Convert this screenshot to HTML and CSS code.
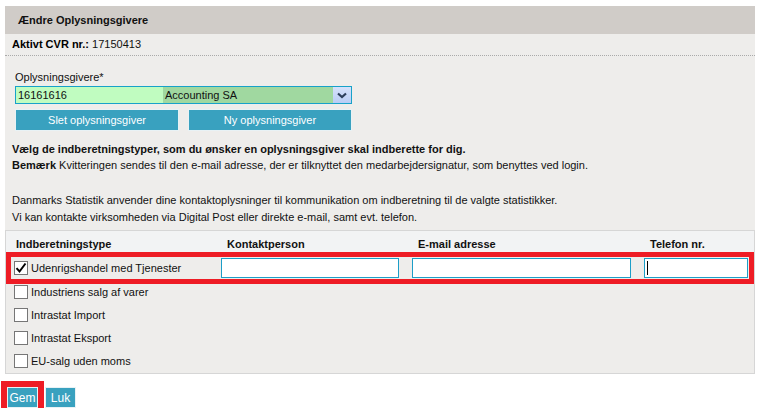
FILE: index.html
```html
<!DOCTYPE html>
<html lang="da">
<head>
    <meta charset="UTF-8">
    <title>Ændre Oplysningsgivere</title>
    <link rel="stylesheet" href="styles.css">
</head>
<body>
    <div class="panel">
        <div class="panel-header">Ændre Oplysningsgivere</div>
        <div class="panel-body">
            <div class="cvr"><b>Aktivt CVR nr.:</b> 17150413</div>

            <div class="giver">
                <div class="field-label">Oplysningsgivere*</div>
                <div class="select">
                    <span class="select-code">16161616</span>
                    <span class="select-name">Accounting SA</span>
                    <span class="select-arrow">
                        <svg width="10" height="7" viewBox="0 0 10 7"><path d="M1 1.5 L5 5 L9 1.5" fill="none" stroke="#2d3f5c" stroke-width="2.2"/></svg>
                    </span>
                </div>
                <div class="giver-buttons">
                    <button class="btn btn-wide">Slet oplysningsgiver</button>
                    <button class="btn btn-wide">Ny oplysningsgiver</button>
                </div>
            </div>

            <div class="info">
                <p><b>Vælg de indberetningstyper, som du ønsker en oplysningsgiver skal indberette for dig.</b></p>
                <p><b>Bemærk</b> Kvitteringen sendes til den e-mail adresse, der er tilknyttet den medarbejdersignatur, som benyttes ved login.</p>
            </div>
            <div class="info info-contact">
                <p>Danmarks Statistik anvender dine kontaktoplysninger til kommunikation om indberetning til de valgte statistikker.</p>
                <p>Vi kan kontakte virksomheden via Digital Post eller direkte e-mail, samt evt. telefon.</p>
            </div>
        </div>

        <div class="types">
            <div class="types-head">
                <div class="row">
                    <span>Indberetningstype</span>
                    <span>Kontaktperson</span>
                    <span>E-mail adresse</span>
                    <span>Telefon nr.</span>
                </div>
            </div>
            <div class="row type-row selected">
                <label class="type"><span class="cb checked"><svg width="12" height="12" viewBox="0 0 12 12"><path d="M1.5 6.2 L4.5 9.5 L10.5 1.5" fill="none" stroke="#000" stroke-width="2"/></svg></span>Udenrigshandel med Tjenester</label>
                <input type="text" class="field">
                <input type="text" class="field">
                <input type="text" class="field field-active">
            </div>
            <div class="row type-row">
                <label class="type"><span class="cb"></span>Industriens salg af varer</label>
            </div>
            <div class="row type-row">
                <label class="type"><span class="cb"></span>Intrastat Import</label>
            </div>
            <div class="row type-row">
                <label class="type"><span class="cb"></span>Intrastat Eksport</label>
            </div>
            <div class="row type-row">
                <label class="type"><span class="cb"></span>EU-salg uden moms</label>
            </div>
        </div>
    </div>

    <div class="actions">
        <button class="btn btn-small selected-btn">Gem</button>
        <button class="btn btn-small">Luk</button>
    </div>
</body>
</html>
```

FILE: styles.css
```css
* {
    margin: 0;
    padding: 0;
    box-sizing: border-box;
}

body {
    font-family: "Liberation Sans", Arial, sans-serif;
    font-size: 11px;
    color: #111;
    background: #fff;
}

.panel {
    width: 750px;
    margin: 6px 0 0 5px;
    background: #eeedeb;
}

.panel-header {
    height: 28px;
    line-height: 28px;
    padding-left: 13px;
    background: #d0ccc8;
    font-weight: bold;
}

.panel-body {
    padding: 0 7px;
}

.cvr {
    height: 22px;
    line-height: 21px;
    border-bottom: 1px dotted #aaa;
    margin: 0 -7px;
    padding-left: 7px;
}

.cvr b {
    color: #000;
}

.giver {
    padding: 14px 0 0 3px;
}

.field-label {
    line-height: 14px;
    margin-bottom: 2px;
}

.select {
    display: flex;
    width: 337px;
    height: 18px;
    border: 1px solid #17a2c9;
    line-height: 16px;
}

.select-code {
    width: 147px;
    background: #c0fcc0;
    padding-left: 2px;
}

.select-name {
    flex: 1;
    background: #a0d8a0;
    padding-left: 2px;
}

.select-arrow {
    width: 18px;
    background: linear-gradient(#d6e2fb, #b9cdf5);
    display: flex;
    align-items: center;
    justify-content: center;
}

.giver-buttons {
    display: flex;
    gap: 9px;
    margin-top: 5px;
}

.btn {
    font-family: inherit;
    font-size: 11px;
    color: #fff;
    background: #39a1bf;
    border: 1px solid #e8f2f5;
    cursor: pointer;
}

.btn-wide {
    width: 164px;
    height: 22px;
}

.info {
    margin-top: 10px;
    line-height: 16px;
}

.info-contact {
    margin-top: 19px;
    line-height: 16.5px;
}

.types {
    margin-top: 5px;
    border: 1px solid #d6d6d6;
    padding-bottom: 1px;
}

.types-head {
    background: #f2f3f4;
    height: 21px;
    padding: 6px 5px 0;
    font-weight: bold;
    line-height: 14px;
}

.row {
    display: grid;
    grid-template-columns: 197px 178px 219px 104px;
    column-gap: 13px;
    align-items: center;
}

.types-head .row span {
    padding-left: 6px;
}

.types-head .row span:first-child {
    padding-left: 5px;
}

.type-row {
    height: 23px;
    margin: 0 5px;
}

.type-row.selected {
    height: 22px;
    margin-top: 5px;
    margin-bottom: 1px;
    outline: 5px solid #ee1c25;
}

.type {
    display: flex;
    align-items: center;
    padding-left: 3px;
}

.cb {
    width: 14px;
    height: 14px;
    border: 1px solid #767676;
    background: #fff;
    margin-right: 3px;
    display: flex;
    align-items: center;
    justify-content: center;
}

.field {
    height: 20px;
    border: 1px solid #1c9ec8;
    background: #fff;
    font-family: inherit;
    font-size: 11px;
    padding: 0 2px;
}

.field-active {
    background: linear-gradient(#000, #000) no-repeat 2px 2px / 1px 14px, #fff;
}

.actions {
    display: flex;
    gap: 7px;
    margin: 13px 0 0 7px;
}

.btn-small {
    width: 31px;
    height: 21px;
    font-size: 12px;
}

.selected-btn {
    outline: 6px solid #ee1c25;
}
```
